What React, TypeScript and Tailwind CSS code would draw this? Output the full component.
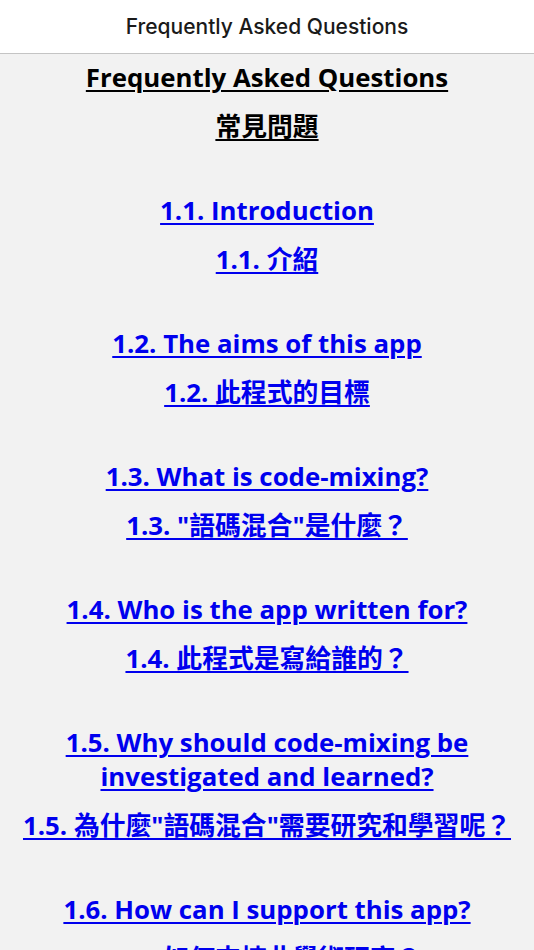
const items = [
  { en: '1.1. Introduction', zh: '1.1. 介紹' },
  { en: '1.2. The aims of this app', zh: '1.2. 此程式的目標' },
  { en: '1.3. What is code-mixing?', zh: '1.3. "語碼混合"是什麼？' },
  { en: '1.4. Who is the app written for?', zh: '1.4. 此程式是寫給誰的？' },
  { en: '1.5. Why should code-mixing be investigated and learned?', zh: '1.5. 為什麼"語碼混合"需要研究和學習呢？' },
  { en: '1.6. How can I support this app?', zh: '1.6. 如何支持此學術研究？' },
];

const body = { fontFamily: '"Open Sans", "Noto Sans CJK TC", sans-serif' };

export default function App() {
  return (
    <div className="h-[950px] overflow-hidden bg-[#f2f2f2]">
      <header
        className="h-[54px] bg-white border-b border-[#c4c4c4] flex items-center justify-center text-[21px] font-medium text-[#1a1a1a]"
        style={{ fontFamily: 'Inter, "Noto Sans", sans-serif' }}
      >
        Frequently Asked Questions
      </header>

      <main className="px-5 pt-[6px] text-center font-bold text-[25.8px] leading-[34px]" style={body}>
        <h1 className="underline underline-offset-[3px] decoration-2 text-black">Frequently Asked Questions</h1>
        <h2 className="mt-[15px] underline underline-offset-[3px] decoration-2 text-black">常見問題</h2>

        {items.map((item) => (
          <div key={item.en} className="mt-[50px] flex flex-col gap-[15px]">
            <a href="#" className="text-[#0000ee] underline underline-offset-[3px] decoration-2">
              {item.en}
            </a>
            <a href="#" className="text-[#0000ee] underline underline-offset-[3px] decoration-2">
              {item.zh}
            </a>
          </div>
        ))}
      </main>
    </div>
  );
}
